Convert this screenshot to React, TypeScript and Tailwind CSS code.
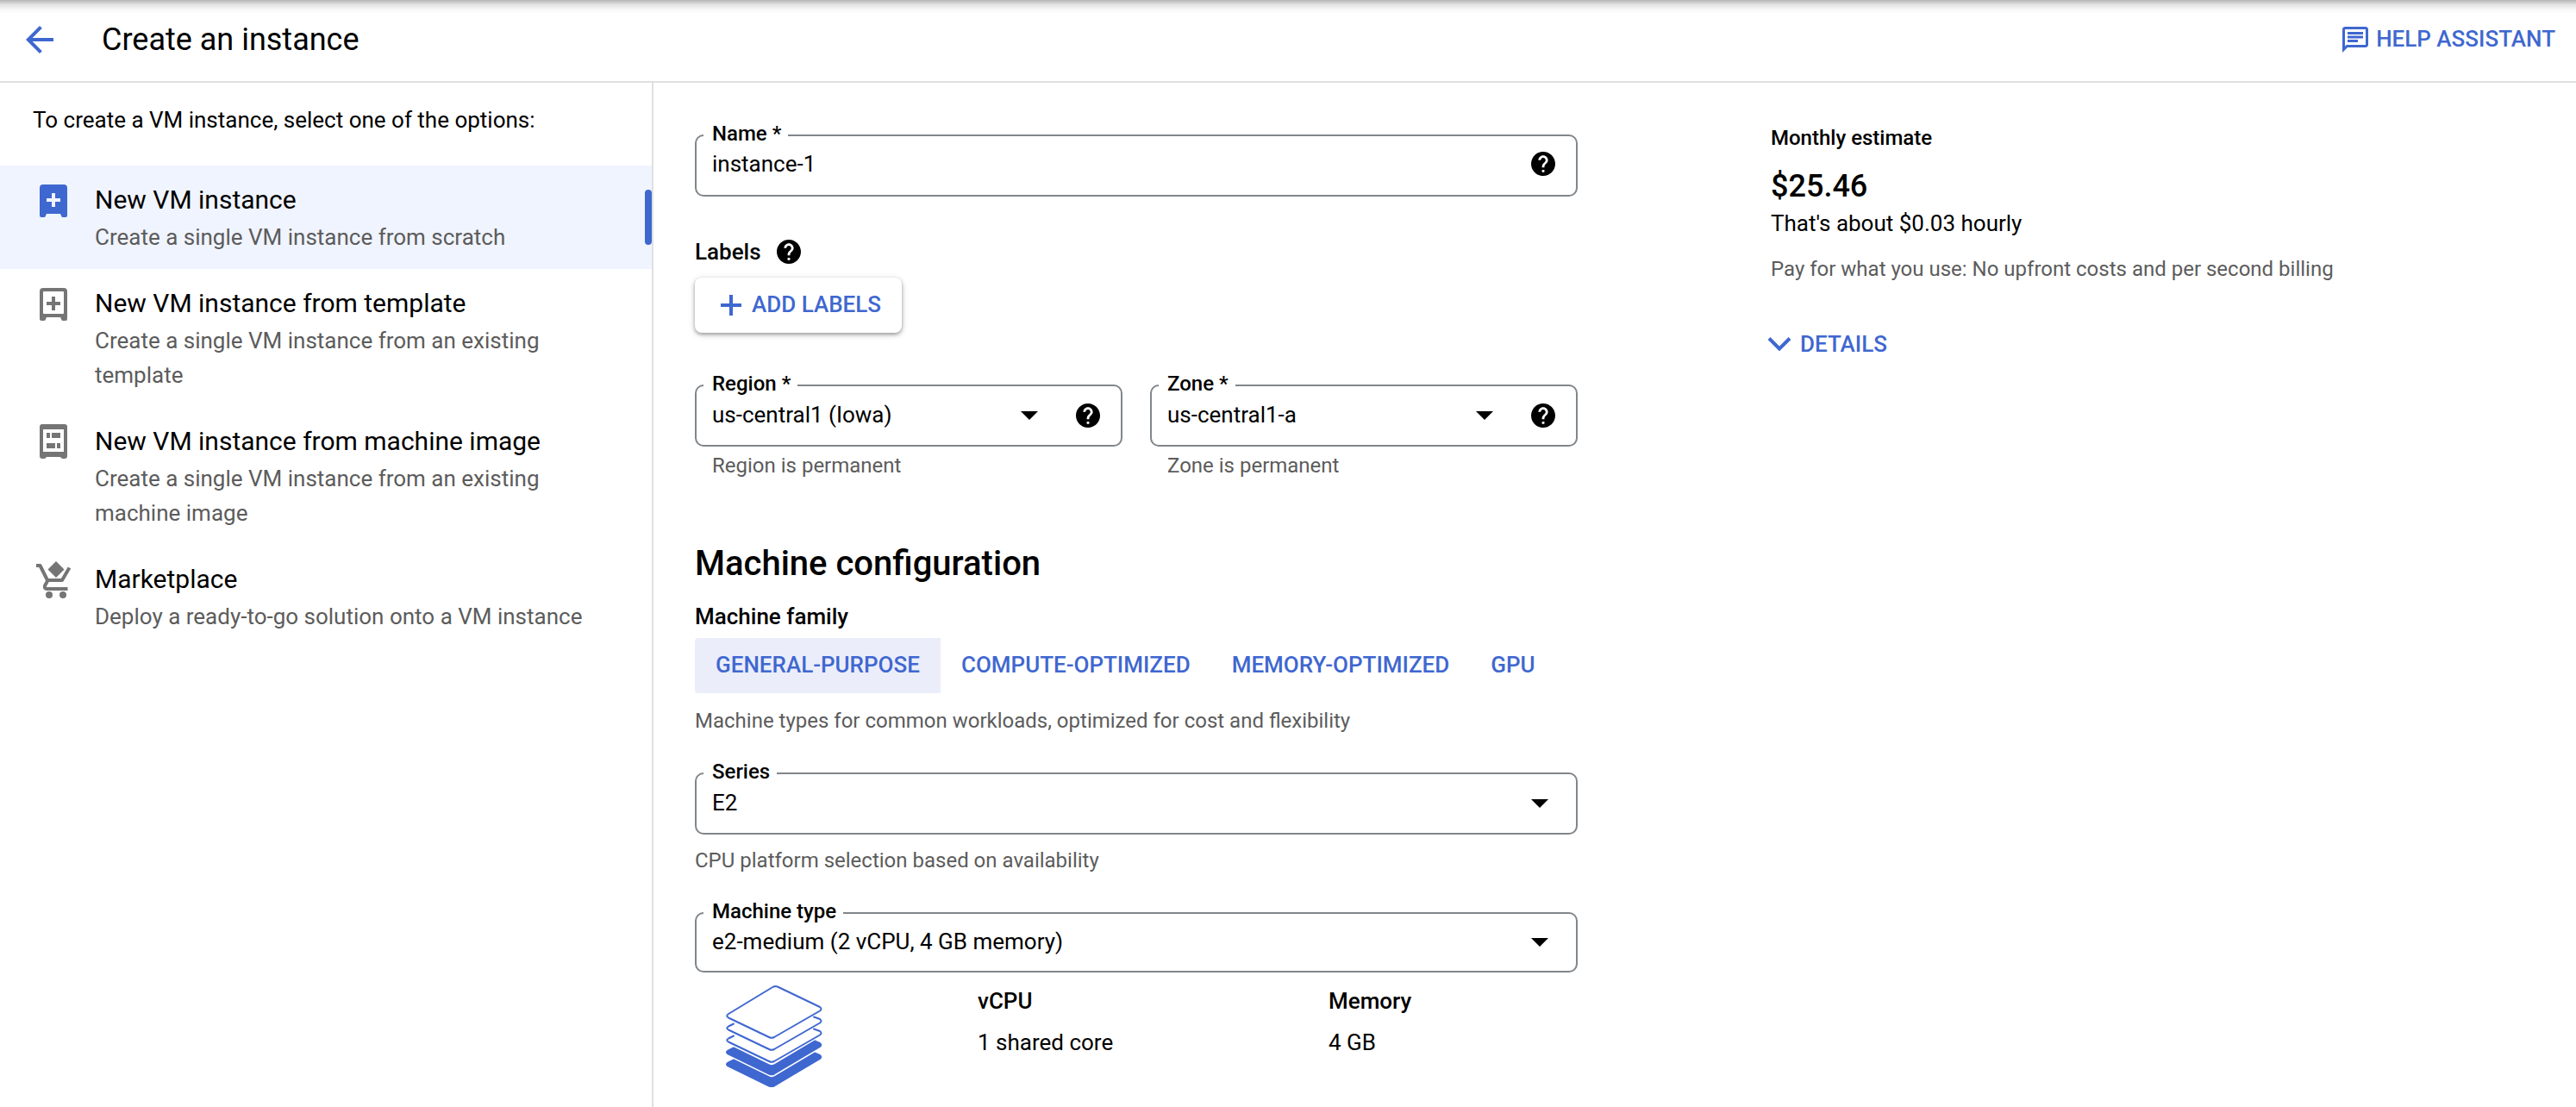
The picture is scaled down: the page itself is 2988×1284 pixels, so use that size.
import type { ReactNode } from 'react';

function HelpIcon() {
  return (
    <svg viewBox="2 2 20 20" className="size-7" fill="currentColor" aria-hidden="true">
      <path d="M12 2C6.48 2 2 6.48 2 12s4.48 10 10 10 10-4.48 10-10S17.52 2 12 2zm1 17h-2v-2h2v2zm2.07-7.75l-.9.92C13.45 12.9 13 13.5 13 15h-2v-.5c0-1.1.45-2.1 1.17-2.83l1.24-1.26c.37-.36.59-.86.59-1.41 0-1.1-.9-2-2-2s-2 .9-2 2H8c0-2.21 1.79-4 4-4s4 1.79 4 4c0 .88-.36 1.68-.93 2.25z" />
    </svg>
  );
}

function HelpButton({ label }: { label: string }) {
  return (
    <button type="button" aria-label={label} className="shrink-0">
      <HelpIcon />
    </button>
  );
}

function FieldFrame({ id, label, className, children }: { id: string; label: string; className: string; children: ReactNode }) {
  return (
    <div className={`relative flex items-center rounded-[10px] border-2 border-[#80868b] pl-[18px] ${className}`}>
      <label htmlFor={id} className="absolute -top-[17px] left-2 bg-white pr-2 pl-2.5 text-2xl leading-7 font-medium">
        {label}
      </label>
      {children}
    </div>
  );
}

function SelectField({ id, label, value, help, className = 'h-[72px]' }: { id: string; label: string; value: string; help?: boolean; className?: string }) {
  return (
    <FieldFrame id={id} label={label} className={`${className} ${help ? 'pr-6' : 'pr-8'}`}>
      <select id={id} defaultValue={value} className="h-full min-w-0 grow appearance-none bg-transparent pb-0.5 text-[26px] outline-none">
        <option>{value}</option>
      </select>
      <svg viewBox="0 0 20 10" className="pointer-events-none h-2.5 w-5 shrink-0" aria-hidden="true">
        <path d="M0 0h20L10 10z" />
      </svg>
      {help && (
        <span className="ml-11 flex">
          <HelpButton label={`Help for ${label}`} />
        </span>
      )}
    </FieldFrame>
  );
}

const VmFilledIcon = (
  <svg viewBox="0 0 48 48" className="size-12" fill="#3f67d0" aria-hidden="true">
    <path fillRule="evenodd" d="M12 6h24a4 4 0 0 1 4 4v32a2 2 0 0 1-2 2h-3a2 2 0 0 1-2-2l-1-2H16l-1 2a2 2 0 0 1-2 2h-3a2 2 0 0 1-2-2V10a4 4 0 0 1 4-4zm10 10v6h-6v4h6v6h4v-6h6v-4h-6v-6z" />
  </svg>
);

const VmOutlineIcon = (
  <svg viewBox="0 0 48 48" className="size-12" fill="#757575" aria-hidden="true">
    <path fillRule="evenodd" d="M12 6h24a4 4 0 0 1 4 4v32a2 2 0 0 1-2 2h-3a2 2 0 0 1-2-2l-1-2H16l-1 2a2 2 0 0 1-2 2h-3a2 2 0 0 1-2-2V10a4 4 0 0 1 4-4zm1 4a1 1 0 0 0-1 1v24a1 1 0 0 0 1 1h22a1 1 0 0 0 1-1V11a1 1 0 0 0-1-1z" />
    <path d="M22 16h4v6h6v4h-6v6h-4v-6h-6v-4h6z" />
  </svg>
);

const MachineImageIcon = (
  <svg viewBox="0 0 48 48" className="size-12" fill="#757575" aria-hidden="true">
    <path fillRule="evenodd" d="M11 4h26a3 3 0 0 1 3 3v34a3 3 0 0 1-3 3h-2q-2 0-3-2H16q-1 2-3 2h-2a3 3 0 0 1-3-3V7a3 3 0 0 1 3-3zm1 6v26h24V10z" />
    <path d="M16 14h4v6h-4zM22 14h10v6H22zM16 26h10v6H16zM28 26h4v6h-4z" />
  </svg>
);

const CartIcon = (
  <svg viewBox="0 0 48 48" className="size-12" fill="none" stroke="#757575" strokeWidth="4" aria-hidden="true">
    <path d="M4 8h4.500l8.500 17h17l8.500-14.500M17.500 25l-3.500 6.500q-1 3.500 2.500 3.500H40.500" strokeLinejoin="round" />
    <path d="M27 3l9.500 9.500-9.500 9.500-9.500-9.500z" fill="#757575" stroke="none" />
    <circle cx="19" cy="42" r="4" fill="#757575" stroke="none" />
    <circle cx="35" cy="42" r="4" fill="#757575" stroke="none" />
  </svg>
);

const options = [
  { title: 'New VM instance', text: 'Create a single VM instance from scratch', icon: VmFilledIcon, selected: true },
  { title: 'New VM instance from template', text: 'Create a single VM instance from an existing template', icon: VmOutlineIcon },
  { title: 'New VM instance from machine image', text: 'Create a single VM instance from an existing machine image', icon: MachineImageIcon },
  { title: 'Marketplace', text: 'Deploy a ready-to-go solution onto a VM instance', icon: CartIcon },
];

const families = ['GENERAL-PURPOSE', 'COMPUTE-OPTIMIZED', 'MEMORY-OPTIMIZED', 'GPU'];

function StackIcon() {
  return (
    <svg viewBox="0 0 112 118" className="mt-1.5 h-[118px] w-28" fill="none" stroke="#3f67d0" strokeWidth="2" strokeLinecap="round" strokeLinejoin="round" aria-hidden="true">
      <path d="M55 1.500Q57.500 .5 60 1.500L109 25Q112 27 109 29.500L56 60Q53 61.500 50 60L3 37.500Q-.5 35.500 3 33z" />
      <path d="M9 44.500L3 47.500Q-.5 49.500 3 51.500L50 74Q53 75.500 56 74L109 43.500Q112 41 109 39L102 36.500" />
      <path d="M9 58.500L3 61.500Q-.5 63.500 3 65.500L50 88Q53 89.500 56 88L109 57.500Q112 55 109 53L102 50.500" />
      <path d="M9 72.500L2 76Q0 77.500 2 79L50 102.500Q53 104 56 102.500L109 71Q111.500 68.500 109 67L103 64.500L56 92.500Q53 94 50 92.500z" fill="#3f67d0" />
      <path d="M9 86.500L2 90Q0 91.500 2 93L50 116.500Q53 118 56 116.500L109 85Q111.500 82.500 109 81L103 78.500L56 106.500Q53 108 50 106.500z" fill="#3f67d0" />
    </svg>
  );
}

export default function App() {
  return (
    <div className="flex min-h-screen flex-col bg-white font-[Roboto,sans-serif] text-[26px] text-black">
      <header className="flex h-24 items-center border-b-2 border-[#e0e0e0] bg-[linear-gradient(to_bottom,#b4b4b4,#e0e0e0_5px,#f8f8f8_11px,#fff_16px)] px-6 pb-0.5">
        <button type="button" aria-label="Back" className="text-[#3f67d0]">
          <svg viewBox="0 0 24 24" className="-ml-0.5 size-12" fill="currentColor" aria-hidden="true">
            <path d="M20 11H7.830l5.590-5.590L12 4l-8 8 8 8 1.410-1.410L7.830 13H20v-2z" />
          </svg>
        </button>
        <h1 className="ml-12 grow text-4xl">Create an instance</h1>
        <button type="button" className="flex items-center gap-1.5 font-medium text-[#3f67d0]">
          <svg viewBox="0 0 24 24" className="size-9" fill="currentColor" aria-hidden="true">
            <path d="M4 4h16v12H5.170L4 17.170V4m0-2c-1.100 0-1.990.9-1.990 2L2 22l4-4h14c1.100 0 2-.9 2-2V4c0-1.100-.9-2-2-2H4zm2 10h8v2H6v-2zm0-3h12v2H6V9zm0-3h12v2H6V6z" />
          </svg>
          <span className="pb-0.5">HELP ASSISTANT</span>
        </button>
      </header>

      <div className="flex grow">
        <nav className="w-[758px] shrink-0 border-r-2 border-[#e0e0e0]">
          <p className="pt-6 pb-[34px] pl-[38px] leading-[38px]">To create a VM instance, select one of the options:</p>
          {options.map((o) => (
            <a
              key={o.title}
              href="#"
              className={`relative flex pr-16 pb-[17px] pl-[38px] ${o.selected ? 'bg-[#f0f4fe]' : ''}`}
            >
              <span className="mt-4 mr-6 shrink-0">{o.icon}</span>
              <span className="pt-5">
                <span className="block text-3xl leading-10">{o.title}</span>
                <span className="mt-[3px] block leading-10 text-[#5c5c5c]">{o.text}</span>
              </span>
              {o.selected && <span className="absolute top-7 right-0 h-16 w-2 rounded bg-[#3f67d0]" />}
            </a>
          ))}
        </nav>

        <main className="flex grow pl-12">
          <form className="w-full max-w-[1024px] pt-[60px]">
            <FieldFrame id="name" label="Name *" className="h-[72px] pr-6 pb-1">
              <input id="name" defaultValue="instance-1" className="min-w-0 grow bg-transparent outline-none" />
              <HelpButton label="Help for name" />
            </FieldFrame>

            <div className="mt-12 flex h-8 items-center gap-[18px] leading-8 font-medium">
              Labels
              <HelpButton label="Help for labels" />
            </div>
            <button
              type="button"
              className="mt-3.5 flex h-16 items-center gap-3 rounded-lg pr-6 pl-[30px] font-medium text-[#3f67d0] shadow-[0_2px_4px_rgba(0,0,0,0.35),0_2px_10px_rgba(0,0,0,0.12)]"
            >
              <svg viewBox="0 0 24 24" className="size-6" fill="currentColor" aria-hidden="true">
                <path d="M10 0h4v10h10v4H14v10h-4V14H0v-4h10z" />
              </svg>
              <span className="pb-0.5">ADD LABELS</span>
            </button>

            <div className="mt-[60px] grid grid-cols-2 gap-8">
              <div>
                <SelectField id="region" label="Region *" value="us-central1 (Iowa)" help />
                <p className="mt-1.5 pl-5 text-2xl leading-8 text-[#5c5c5c]">Region is permanent</p>
              </div>
              <div>
                <SelectField id="zone" label="Zone *" value="us-central1-a" help />
                <p className="mt-1.5 pl-5 text-2xl leading-8 text-[#5c5c5c]">Zone is permanent</p>
              </div>
            </div>

            <h2 className="mt-[74px] text-[40px] leading-12 font-medium">Machine configuration</h2>
            <h3 className="mt-[21px] leading-8 font-medium">Machine family</h3>
            <div className="mt-[9px] flex">
              {families.map((f, i) => (
                <button
                  key={f}
                  type="button"
                  className={`h-16 rounded-l px-6 pb-0.5 font-medium whitespace-nowrap text-[#3f67d0] ${i === 0 ? 'bg-[#ebeefa]' : ''}`}
                >
                  {f}
                </button>
              ))}
            </div>
            <p className="mt-4 mb-11 text-2xl leading-8 text-[#5c5c5c]">Machine types for common workloads, optimized for cost and flexibility</p>
            <SelectField id="series" label="Series" value="E2" />
            <p className="mt-3.5 mb-11 text-2xl leading-8 text-[#5c5c5c]">CPU platform selection based on availability</p>
            <SelectField id="machine-type" label="Machine type" value="e2-medium (2 vCPU, 4 GB memory)" className="h-[70px]" />

            <div className="mt-[9px] grid grid-cols-[328fr_407fr_289fr] leading-12">
              <div className="pl-9">
                <StackIcon />
              </div>
              <dl>
                <dt className="font-medium">vCPU</dt>
                <dd>1 shared core</dd>
              </dl>
              <dl>
                <dt className="font-medium">Memory</dt>
                <dd>4 GB</dd>
              </dl>
            </div>
          </form>

          <aside className="ml-56 shrink-0 pt-12">
            <h2 className="text-2xl leading-8 font-medium">Monthly estimate</h2>
            <p className="mt-[15px] text-4xl leading-[50px] font-medium">$25.46</p>
            <p className="leading-9">That's about $0.03 hourly</p>
            <p className="mt-[19px] text-2xl leading-8 text-[#5c5c5c]">Pay for what you use: No upfront costs and per second billing</p>
            <button type="button" className="mt-[55px] -ml-1 flex items-center gap-2.5 leading-8 font-medium text-[#3f67d0]">
              <svg viewBox="0 0 28 16" className="h-4 w-7" fill="none" stroke="currentColor" strokeWidth="4" aria-hidden="true">
                <path d="M2 1.500l12 12 12-12" />
              </svg>
              DETAILS
            </button>
          </aside>
        </main>
      </div>
    </div>
  );
}
